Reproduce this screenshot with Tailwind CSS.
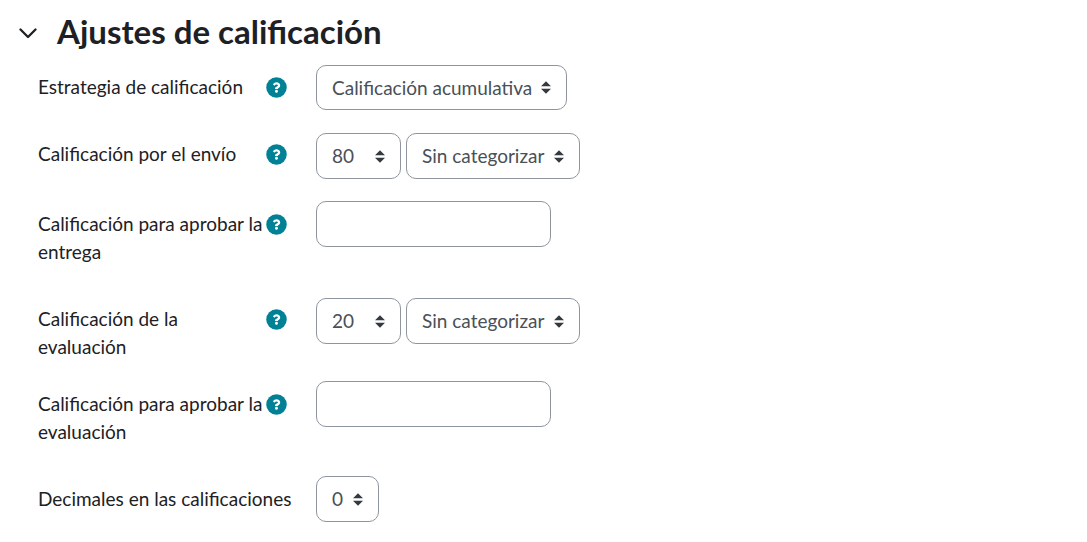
<!DOCTYPE html>
<html lang="es">
<head>
<meta charset="utf-8">
<meta name="viewport" content="width=device-width, initial-scale=1">
<title>Ajustes de calificación</title>
<script src="https://cdn.jsdelivr.net/npm/@tailwindcss/browser@4"></script>
</head>
<body class="bg-white font-['Lato',sans-serif] text-[19px] leading-7 text-[#1d2125]">
<svg class="hidden" aria-hidden="true">
  <symbol id="caret" viewBox="0 0 4 5"><path fill="#343a40" d="M2 0L0 2h4zm0 5L0 3h4z"/></symbol>
  <symbol id="help" viewBox="0 0 512 512"><circle cx="256" cy="256" r="250" fill="#008196"/><path fill="#fff" transform="translate(66 63) scale(.74)" d="M262.700 90c-54.500 0-89.300 23-116.500 63.800-3.500 5.300-2.400 12.400 2.700 16.300l34.700 26.300c5.200 3.900 12.600 3 16.700-2.100 17.900-22.700 30.100-35.800 57.300-35.800 20.400 0 45.700 13.100 45.700 33 0 15-12.400 22.700-32.500 34C247.100 238.500 206 254.900 206 296v4c0 6.600 5.400 12 12 12h76c6.600 0 12-5.400 12-12v-1.300c0-28.500 73.200-29.600 73.200-106.700 0-58-60.200-102-116.500-102zM256 334c-27 0-50 22-50 50s23 50 50 50 50-22 50-50-23-50-50-50z"/></symbol>
</svg>
<form class="pb-5">
  <h2 class="mb-1 flex h-[61px] items-center pl-[17px] text-[33px] leading-10 font-bold">
    <button type="button" class="mt-1.5 mr-[18px] flex size-[22px] items-center justify-center" aria-label="Contraer" aria-expanded="true">
      <svg class="h-[11px] w-[18px]" viewBox="0 0 18 11" fill="none" stroke="#1d2125" stroke-width="2.300" stroke-linecap="round" stroke-linejoin="round"><path d="M1.500 1.500L9 9l7.500-7.500"/></svg>
    </button>
    Ajustes de calificación
  </h2>

  <div class="mb-[23px] flex pl-[38px]">
    <div class="mr-[29px] flex w-[249px] shrink-0 items-start pt-2">
      <label for="strategy" class="flex-1">Estrategia de calificación</label>
      <button type="button" class="flex h-7 items-center" aria-label="Ayuda"><svg class="size-[21px]"><use href="#help"/></svg></button>
    </div>
    <div class="grid w-[251px] items-center">
      <select id="strategy" class="col-start-1 row-start-1 h-[45px] w-full appearance-none rounded-[10px] border border-[#8f959e] bg-white pl-[15px] text-[#495057]"><option>Calificación acumulativa</option></select>
      <svg class="pointer-events-none col-start-1 row-start-1 mr-4 h-[13px] w-[10px] justify-self-end"><use href="#caret"/></svg>
    </div>
  </div>

  <div class="mb-[22px] flex pl-[38px]">
    <div class="mr-[29px] flex w-[249px] shrink-0 items-start pt-[7px]">
      <label for="grade" class="flex-1">Calificación por el envío</label>
      <button type="button" class="flex h-7 items-center" aria-label="Ayuda"><svg class="size-[21px]"><use href="#help"/></svg></button>
    </div>
    <div class="flex items-start gap-[5px]">
      <div class="grid w-[85px] items-center">
        <select id="grade" class="col-start-1 row-start-1 h-[46px] w-full appearance-none rounded-[10px] border border-[#8f959e] bg-white pl-[15px] text-[#495057]"><option>80</option></select>
        <svg class="pointer-events-none col-start-1 row-start-1 mr-4 h-[13px] w-[10px] justify-self-end"><use href="#caret"/></svg>
      </div>
      <div class="grid w-[174px] items-center">
        <select aria-label="Categoría del envío" class="col-start-1 row-start-1 h-[46px] w-full appearance-none rounded-[10px] border border-[#8f959e] bg-white pl-[15px] text-[#495057]"><option>Sin categorizar</option></select>
        <svg class="pointer-events-none col-start-1 row-start-1 mr-4 h-[13px] w-[10px] justify-self-end"><use href="#caret"/></svg>
      </div>
    </div>
  </div>

  <div class="mb-8 flex pl-[38px]">
    <div class="mr-[29px] flex w-[249px] shrink-0 items-start pt-[9px]">
      <label for="pass-submission" class="flex-1">Calificación para aprobar la entrega</label>
      <button type="button" class="flex h-7 items-center" aria-label="Ayuda"><svg class="size-[21px]"><use href="#help"/></svg></button>
    </div>
    <input id="pass-submission" type="text" class="h-[46px] w-[235px] rounded-[10px] border border-[#8f959e] px-[15px] text-[#495057]">
  </div>

  <div class="mb-5 flex pl-[38px]">
    <div class="mr-[29px] flex w-[249px] shrink-0 items-start pt-[7px]">
      <label for="assessment" class="flex-1">Calificación de la evaluación</label>
      <button type="button" class="flex h-7 items-center" aria-label="Ayuda"><svg class="size-[21px]"><use href="#help"/></svg></button>
    </div>
    <div class="flex items-start gap-[5px]">
      <div class="grid w-[85px] items-center">
        <select id="assessment" class="col-start-1 row-start-1 h-[46px] w-full appearance-none rounded-[10px] border border-[#8f959e] bg-white pl-[15px] text-[#495057]"><option>20</option></select>
        <svg class="pointer-events-none col-start-1 row-start-1 mr-4 h-[13px] w-[10px] justify-self-end"><use href="#caret"/></svg>
      </div>
      <div class="grid w-[174px] items-center">
        <select aria-label="Categoría de la evaluación" class="col-start-1 row-start-1 h-[46px] w-full appearance-none rounded-[10px] border border-[#8f959e] bg-white pl-[15px] text-[#495057]"><option>Sin categorizar</option></select>
        <svg class="pointer-events-none col-start-1 row-start-1 mr-4 h-[13px] w-[10px] justify-self-end"><use href="#caret"/></svg>
      </div>
    </div>
  </div>

  <div class="mb-[30px] flex pl-[38px]">
    <div class="mr-[29px] flex w-[249px] shrink-0 items-start pt-[9px]">
      <label for="pass-assessment" class="flex-1">Calificación para aprobar la evaluación</label>
      <button type="button" class="flex h-7 items-center" aria-label="Ayuda"><svg class="size-[21px]"><use href="#help"/></svg></button>
    </div>
    <input id="pass-assessment" type="text" class="h-[46px] w-[235px] rounded-[10px] border border-[#8f959e] px-[15px] text-[#495057]">
  </div>

  <div class="flex pl-[38px]">
    <div class="mr-[29px] w-[249px] shrink-0 pt-[9px]">
      <label for="decimals" class="whitespace-nowrap">Decimales en las calificaciones</label>
    </div>
    <div class="grid w-[63px] items-center">
      <select id="decimals" class="col-start-1 row-start-1 h-[46px] w-full appearance-none rounded-[10px] border border-[#8f959e] bg-white pl-[15px] text-[#495057]"><option>0</option></select>
      <svg class="pointer-events-none col-start-1 row-start-1 mr-4 h-[13px] w-[10px] justify-self-end"><use href="#caret"/></svg>
    </div>
  </div>
</form>
</body>
</html>
